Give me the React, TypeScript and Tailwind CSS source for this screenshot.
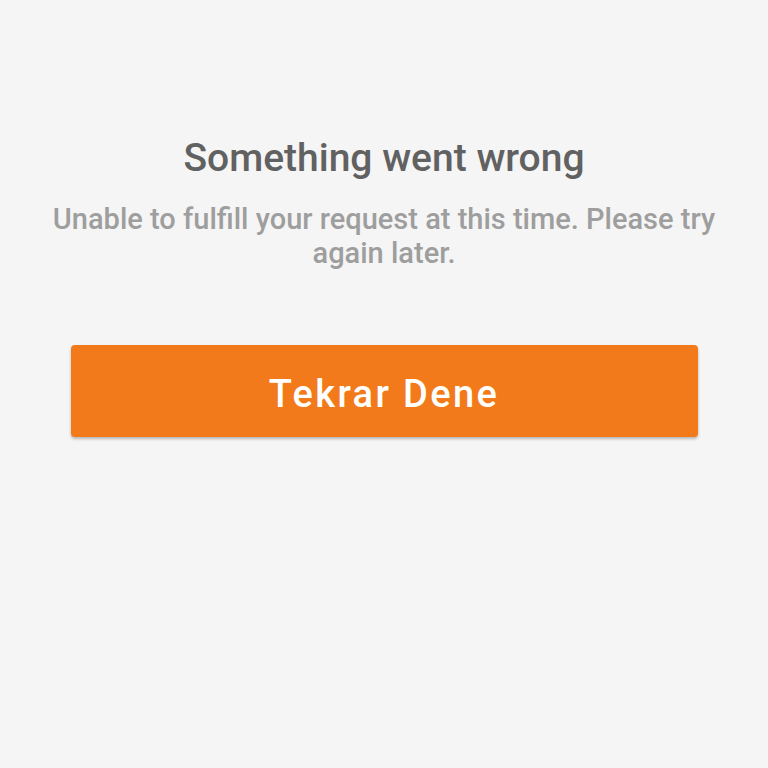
export default function App() {
  return (
    <div className="w-[768px] h-[768px] bg-[#f5f5f5] flex flex-col items-center" style={{ fontFamily: 'Roboto, "Noto Sans", sans-serif' }}>
      <h1 className="mt-[133px] text-[39px] leading-[50px] font-medium text-[#616161]">Something went wrong</h1>
      <p className="mt-[19px] px-[40px] text-center text-[29px] leading-[34px] font-medium text-[#9e9e9e]">
        Unable to fulfill your request at this time. Please try again later.
      </p>
      <button className="mt-[75px] w-[627px] h-[92px] pt-[6px] rounded-[4px] bg-[#f27a1a] text-white text-[38px] font-medium tracking-[2.4px] shadow-[0_2px_3px_rgba(0,0,0,0.25)]">
        Tekrar Dene
      </button>
    </div>
  );
}
